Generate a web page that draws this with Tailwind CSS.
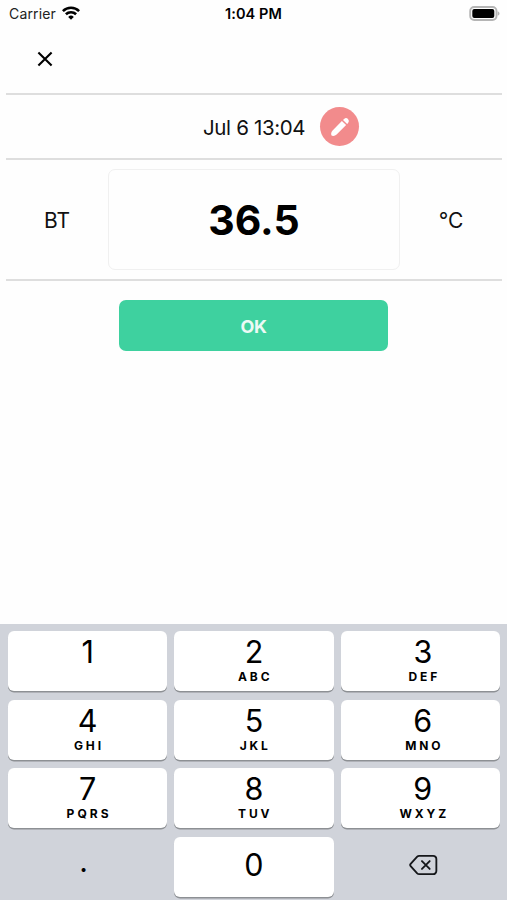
<!DOCTYPE html>
<html lang="en">
<head>
<meta charset="utf-8">
<title>Temperature</title>
<script src="https://cdn.jsdelivr.net/npm/@tailwindcss/browser@4"></script>
</head>
<body class="w-[507px] h-[900px] overflow-hidden bg-[#fefefe] text-black font-['Inter','Liberation_Sans',sans-serif] flex flex-col">
<header class="h-[27px] grid grid-cols-3 items-center pl-[9px] pr-[7px] shrink-0">
  <div class="flex items-center gap-[6px]">
    <span class="text-[14px] leading-[27px] tracking-[0.15px] text-[#222]">Carrier</span>
    <svg class="w-[18px] h-[14px] -mt-[2px]" viewBox="0 0 18 14" fill="none" stroke="#000" stroke-width="2.6"><path d="M.9 5.1a11.600 11.600 0 0 1 16.200 0"/><path d="M3.900 8.300a7.300 7.300 0 0 1 10.200 0"/><path d="M9 13.700 6.200 10.900a4 4 0 0 1 5.600 0Z" fill="#000" stroke="none"/></svg>
  </div>
  <div class="text-center text-[14.5px] leading-[27px] font-semibold tracking-[0.1px] pr-[2px]">1:04 PM</div>
  <svg class="w-[31px] h-[15px] justify-self-end" viewBox="0 0 31 15"><rect x="1.2" y="1" width="26.3" height="13" rx="4" fill="#fff" stroke="#b5b5b5" stroke-width="1.9"/><rect x="3.300" y="3" width="22" height="9" rx="2" fill="#000"/><path d="M28.700 5.200c2.400 1 2.400 3.600 0 4.600Z" fill="#b5b5b5"/></svg>
</header>
<main class="flex flex-col mx-[6px] mr-[5px] flex-1">
  <div class="h-[68px] flex items-center pl-[31px] shrink-0 border-b-[2px] border-[#dedede]">
    <svg class="w-[16px] h-[16px] -mt-[2px]" viewBox="0 0 16 16" fill="none" stroke="#000" stroke-width="2.1"><path d="M1.400 1.400 14.600 14.600M14.600 1.400 1.400 14.600"/></svg>
  </div>
  <div class="h-[65px] flex items-center pl-[197px] gap-[15px] shrink-0 border-b-[2px] border-[#dedede]">
    <span class="w-[102px] whitespace-nowrap text-[20.500px] leading-[26px] tracking-[-0.350px] pt-[2px] text-[#111]">Jul 6 13:04</span>
    <button class="w-[39px] h-[39px] rounded-full bg-[#f28b8c] flex items-center justify-center">
      <svg class="w-[20px] h-[20px]" viewBox="0 0 20 20" fill="#fff"><path d="M11.900 3.900 16.100 8.100 6.600 17.600q-1.400 1.400-3.400 1.500-2.200.1-2.100-2.100.1-2 1.500-3.400ZM13 2.900l1.100-1q2-1.700 3.900.1 1.800 1.900.1 3.900L17.100 7Z"/></svg>
    </button>
  </div>
  <div class="h-[121px] grid grid-cols-[102px_292px_102px] items-center shrink-0 border-b-[2px] border-[#dedede]">
    <span class="text-center text-[21px] pt-[2px] text-[#111]">BT</span>
    <div class="h-[101px] rounded-[7px] border-[1.500px] border-[#f0f0f0] bg-[#fefefe] flex items-center justify-center text-[41px] font-bold pt-[2px]">36.5</div>
    <span class="text-center text-[21px] pt-[2px] text-[#111]">°C</span>
  </div>
  <button class="mt-[19px] ml-[113px] w-[269px] h-[51px] rounded-[7px] bg-[#3ed19f] text-white/90 text-[18px] font-bold tracking-[-0.300px] pt-[1px]">OK</button>
</main>
<section class="h-[276px] bg-[#d0d3da] pt-[7px] pl-[8px] pr-[7px] grid grid-cols-3 auto-rows-[60px] gap-x-[7px] gap-y-[8.600px] shrink-0">
  <button class="bg-white rounded-[6px] shadow-[0_1.5px_0_#8d9094] flex flex-col items-center pt-[5px]"><span class="text-[30.500px] leading-[32px]">1</span></button>
  <button class="bg-white rounded-[6px] shadow-[0_1.5px_0_#8d9094] flex flex-col items-center pt-[5px]"><span class="text-[30.500px] leading-[32px]">2</span><span class="text-[12px] leading-[18px] font-bold tracking-[2.900px] pl-[2.500px]">ABC</span></button>
  <button class="bg-white rounded-[6px] shadow-[0_1.5px_0_#8d9094] flex flex-col items-center pt-[5px] pl-[5px]"><span class="text-[30.500px] leading-[32px]">3</span><span class="text-[12px] leading-[18px] font-bold tracking-[2.900px] pl-[3px]">DEF</span></button>
  <button class="bg-white rounded-[6px] shadow-[0_1.5px_0_#8d9094] flex flex-col items-center pt-[5px]"><span class="text-[30.500px] leading-[32px]">4</span><span class="text-[12px] leading-[18px] font-bold tracking-[2.900px] pl-[2.500px]">GHI</span></button>
  <button class="bg-white rounded-[6px] shadow-[0_1.5px_0_#8d9094] flex flex-col items-center pt-[5px]"><span class="text-[30.500px] leading-[32px]">5</span><span class="text-[12px] leading-[18px] font-bold tracking-[2.900px] pl-[2.500px]">JKL</span></button>
  <button class="bg-white rounded-[6px] shadow-[0_1.5px_0_#8d9094] flex flex-col items-center pt-[5px] pl-[5px]"><span class="text-[30.500px] leading-[32px]">6</span><span class="text-[12px] leading-[18px] font-bold tracking-[2.900px] pl-[3px]">MNO</span></button>
  <button class="bg-white rounded-[6px] shadow-[0_1.5px_0_#8d9094] flex flex-col items-center pt-[5px]"><span class="text-[30.500px] leading-[32px]">7</span><span class="text-[12px] leading-[18px] font-bold tracking-[3.100px] pl-[3px]">PQRS</span></button>
  <button class="bg-white rounded-[6px] shadow-[0_1.5px_0_#8d9094] flex flex-col items-center pt-[5px]"><span class="text-[30.500px] leading-[32px]">8</span><span class="text-[12px] leading-[18px] font-bold tracking-[2.900px] pl-[2.500px]">TUV</span></button>
  <button class="bg-white rounded-[6px] shadow-[0_1.5px_0_#8d9094] flex flex-col items-center pt-[5px] pl-[5px]"><span class="text-[30.500px] leading-[32px]">9</span><span class="text-[12px] leading-[18px] font-bold tracking-[2.900px] pl-[3px]">WXYZ</span></button>
  <button class="flex items-center justify-center pr-[8px] text-[30px] leading-[30px] pb-[11px]">.</button>
  <button class="bg-white rounded-[6px] shadow-[0_1.5px_0_#8d9094] flex items-center justify-center pb-[3px] text-[30.500px] leading-[32px]">0</button>
  <button class="flex items-center justify-center pl-[7px] pb-[3px]">
    <svg class="w-[29px] h-[22px]" viewBox="0 0 30 22" fill="none" stroke="#15171a" stroke-width="1.9" stroke-linejoin="round" stroke-linecap="round"><path d="M10.500 1.500H25a3.300 3.300 0 0 1 3.300 3.300v12.400a3.300 3.300 0 0 1-3.300 3.300H10.500q-1.200 0-2-.8L1.700 12.100q-1-1.100 0-2.200L8.500 2.300q.8-.8 2-.8Z"/><path d="m13.400 6.900 8 8.200m0-8.200-8 8.200"/></svg>
  </button>
</section>
</body>
</html>
